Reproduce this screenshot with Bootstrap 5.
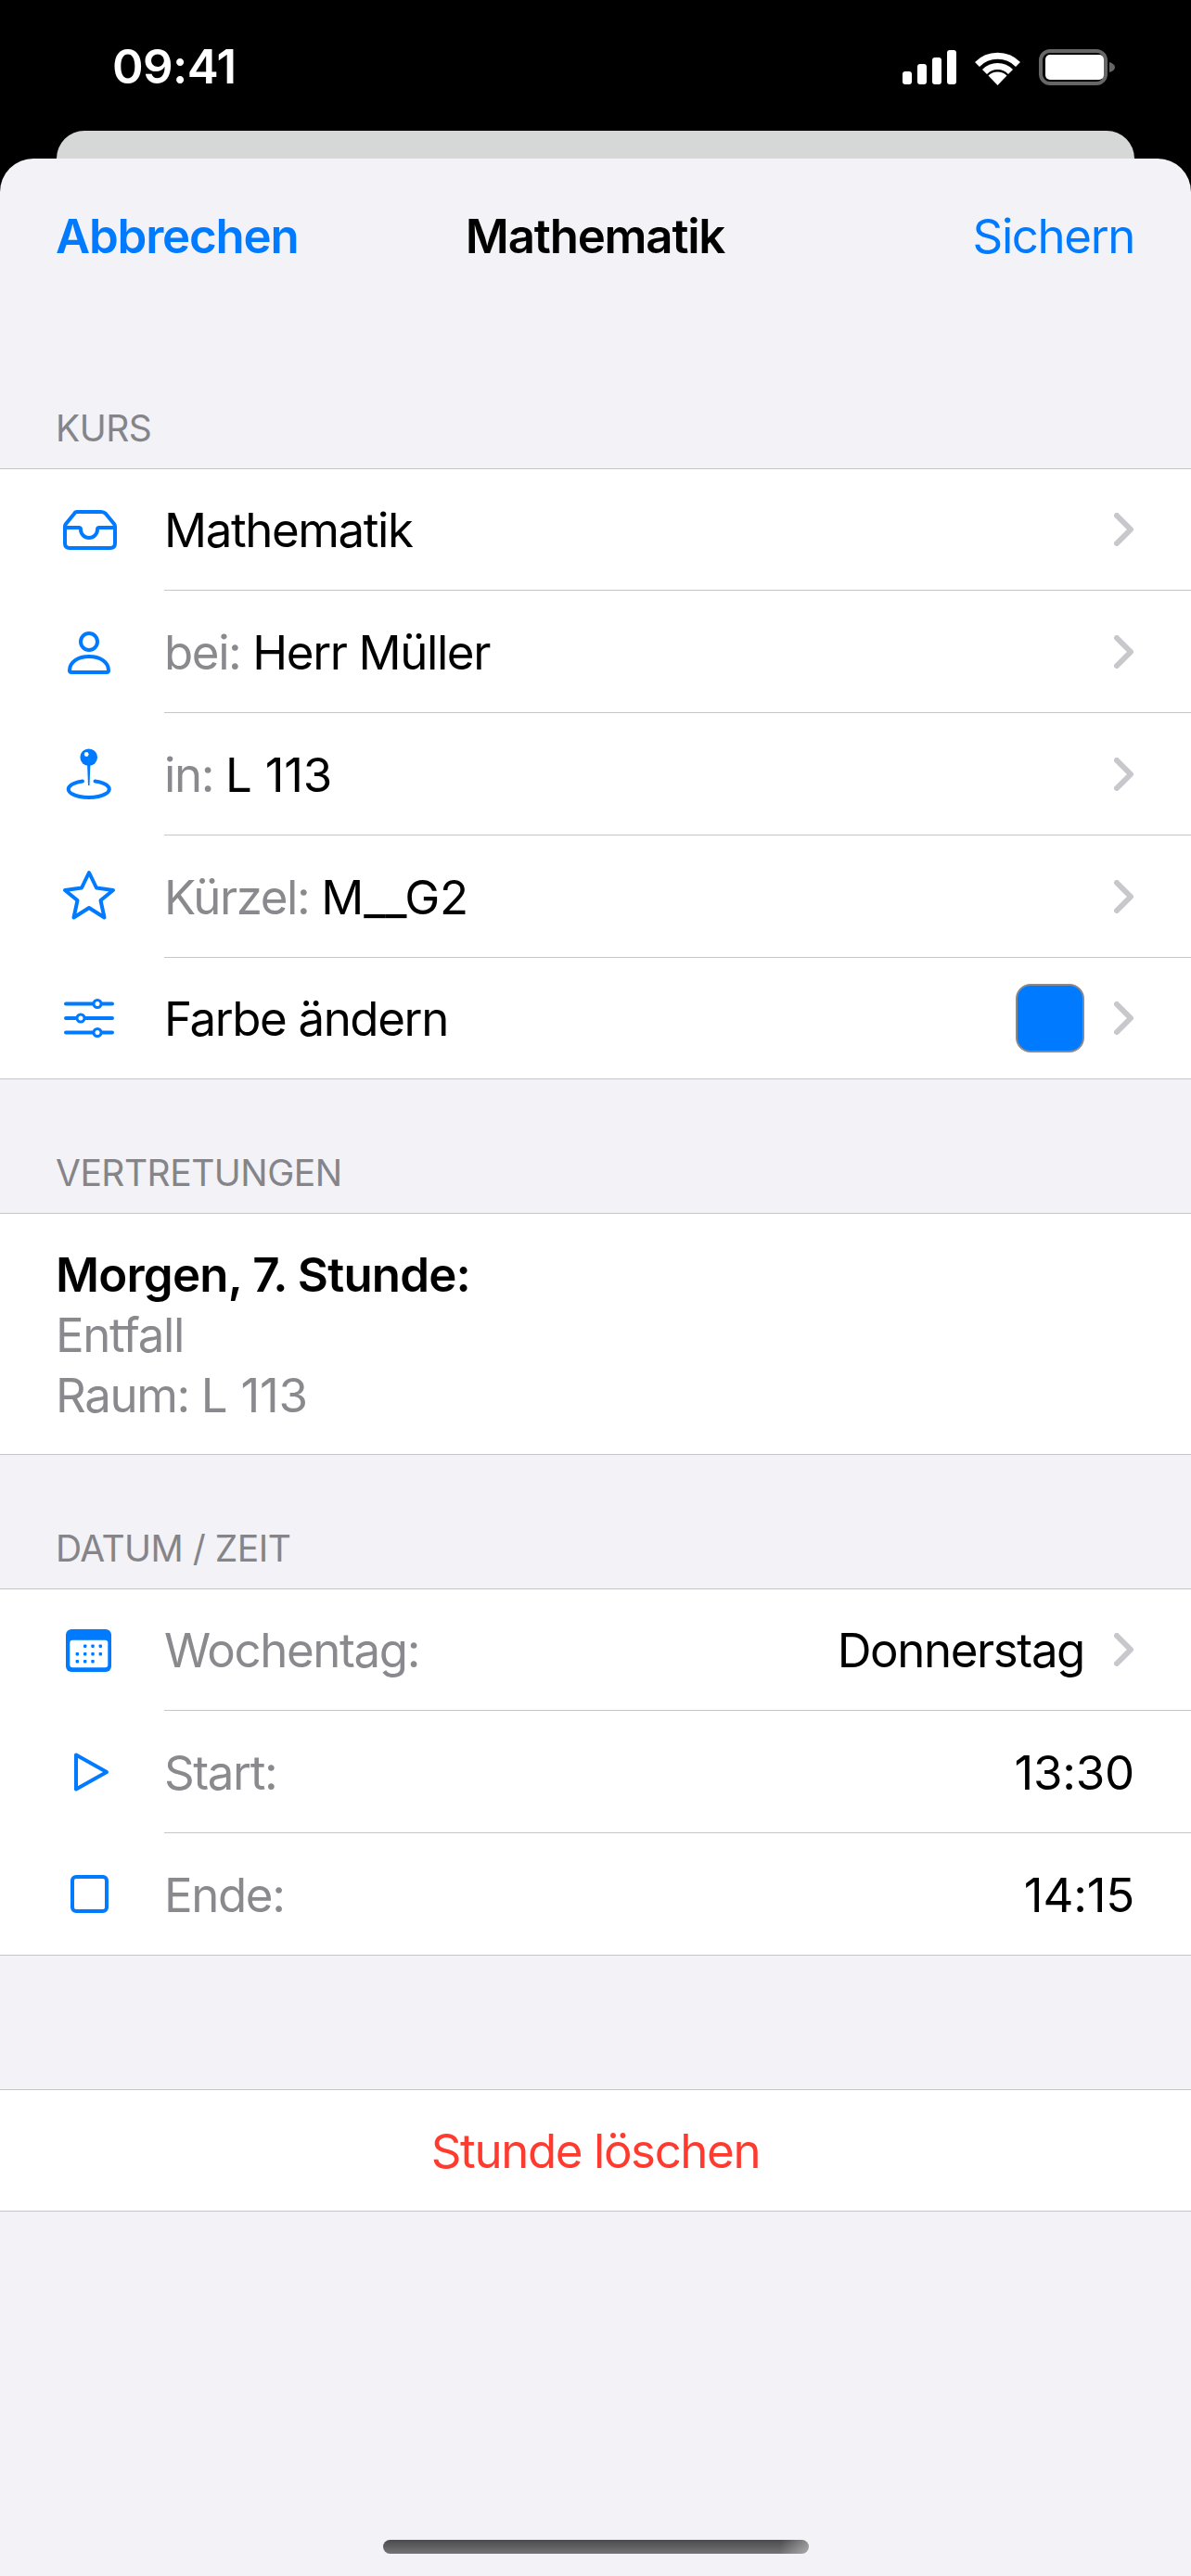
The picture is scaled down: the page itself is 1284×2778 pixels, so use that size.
<!DOCTYPE html>
<html lang="de">

<head>
    <meta charset="UTF-8">
    <title>Mathematik</title>
    <link href="https://cdn.jsdelivr.net/npm/bootstrap@5.3.3/dist/css/bootstrap.min.css" rel="stylesheet">
    <style>
        body {
            background: #000;
            font-family: Inter, "Liberation Sans", sans-serif;
            font-size: 51px;
            letter-spacing: -1.4px;
            color: #000;
        }

        .phone-page {
            min-height: 100vh;
        }

        .status-bar {
            height: 141px;
            padding: 47px 82px 0 121px;
            color: #fff;
            font-weight: 600;
            line-height: 50px;
        }

        .status-bar svg {
            display: block;
        }

        .status-bar .num-txt {
            letter-spacing: -.6px;
        }

        .back-card {
            height: 30px;
            margin: 0 61px;
            background: #d6d8d7;
            border-radius: 30px 30px 0 0;
        }

        .sheet {
            background: #f2f2f7;
            border-radius: 36px 36px 0 0;
        }

        .sheet-nav {
            height: 190px;
            padding: 58px 61px 0 60px;
            line-height: 52px;
        }

        .sheet-nav > * {
            flex: 1 1 0;
        }

        .sheet-nav a {
            color: #007aff;
            text-decoration: none;
        }

        .semi-txt {
            font-weight: 600;
            letter-spacing: -1.2px;
        }

        .section-label {
            margin-top: 76px;
            padding: 1px 61px 20px 60px;
            height: 68px;
            font-size: 39px;
            line-height: 47px;
            letter-spacing: -.5px;
            color: #858589;
            text-transform: uppercase;
        }

        .ios-list {
            border-top: 1px solid #c6c6c8;
            border-bottom: 1px solid #c6c6c8;
            border-radius: 0;
            background: #fff;
        }

        .ios-row {
            height: 132px;
            padding: 0;
            border: 0;
            color: #000;
        }

        .ios-row:first-child {
            height: 130px;
        }

        .ios-row.row-short {
            height: 131px;
        }

        .ios-ico {
            width: 177px;
            padding-left: 56px;
            flex: none;
        }

        .ios-ico svg {
            display: block;
        }

        .ios-line {
            min-width: 0;
            padding-right: 61px;
        }

        .ios-line span {
            padding-top: 3px;
        }

        .ios-row + .ios-row .ios-line {
            border-top: 1px solid #c6c6c8;
        }

        .muted-txt {
            color: #8a8a8e;
        }

        .num-txt {
            letter-spacing: -.2px;
        }

        .chev {
            display: block;
            flex: none;
            margin-left: 32px;
        }

        .color-swatch {
            width: 74px;
            height: 74px;
            background: #007aff;
            border: 2px solid #8a8a8e;
            border-radius: 16px;
            flex: none;
        }

        .subst-block {
            height: 261px;
            padding: 33px 61px 0 60px;
            line-height: 65px;
        }

        .subst-block .semi-txt {
            letter-spacing: -.8px;
        }

        .delete-row {
            margin-top: 144px;
            height: 132px;
            padding-top: 2px;
            color: #ff3b30;
        }

        .sheet-foot {
            height: 393px;
            padding-top: 354px;
        }

        .home-bar {
            width: 459px;
            height: 15px;
            background: linear-gradient(100deg, rgba(255, 255, 255, 0) 93%, rgba(255, 255, 255, .4)), linear-gradient(180deg, #4b4b4d, #747476);
            border-radius: 8px;
        }
    </style>
</head>

<body>
    <div class="phone-page d-flex flex-column">
        <div class="status-bar d-flex justify-content-between">
            <span class="num-txt">09:41</span>
            <div class="d-flex align-items-start">
                <svg width="58" height="37" viewBox="0 0 58 37" fill="#fff" style="margin-top:7px">
                    <rect x="0" y="23" width="10" height="14" rx="3" />
                    <rect x="16" y="15" width="10" height="22" rx="3" />
                    <rect x="32" y="8" width="10" height="29" rx="3" />
                    <rect x="48" y="0" width="10" height="37" rx="3" />
                </svg>
                <svg width="49" height="37" viewBox="0 0 49 37" fill="none" stroke="#fff" stroke-width="7" style="margin-top:8px;margin-left:20px">
                    <path d="M2.5 14.5A31 31 0 0 1 46.5 14.5" />
                    <path d="M10.5 22.5A19.5 19.5 0 0 1 38.5 22.5" />
                    <path d="M24.5 37L14.5 26.5A14.5 14.5 0 0 1 34.5 26.5Z" fill="#fff" stroke="none" />
                </svg>
                <svg width="82" height="39" viewBox="0 0 82 39" style="margin-top:6px;margin-left:20px">
                    <rect x="2" y="2" width="70" height="35" rx="10" fill="none" stroke="#666" stroke-width="4" />
                    <rect x="7" y="6" width="63" height="27" rx="5" fill="#fff" />
                    <path d="M76 14q6 2 6 5.500t-6 5.500z" fill="#666" />
                </svg>
            </div>
        </div>
        <div class="back-card"></div>
        <div class="sheet flex-grow-1">
            <div class="sheet-nav d-flex">
                <div><a href="#" class="semi-txt">Abbrechen</a></div>
                <div class="semi-txt text-center">Mathematik</div>
                <div class="text-end"><a href="#">Sichern</a></div>
            </div>

            <div class="section-label">Kurs</div>
            <div class="list-group list-group-flush ios-list">
                <div class="list-group-item ios-row d-flex">
                    <span class="ios-ico d-flex align-items-center">
                        <svg width="80" height="80" viewBox="0 0 80 80" fill="none" stroke="#007aff" stroke-width="4" stroke-linejoin="round" stroke-linecap="round">
                            <path d="M27 21h26q3 0 5 2l9 11q1 1 1 3v18q0 5-5 5H19q-5 0-5-5V37q0-2 1-3l9-11q1-2 3-2z" />
                            <path d="M14 38H29q2 0 2 2a9 9 0 0 0 18 0q0-2 2-2H68" />
                        </svg>
                    </span>
                    <div class="ios-line d-flex flex-grow-1 align-items-center justify-content-between">
                        <span>Mathematik</span>
                        <svg class="chev" width="22" height="36" viewBox="0 0 22 36" fill="none" stroke="#c7c7cc" stroke-width="6" stroke-linecap="round" stroke-linejoin="round"><path d="M3 3l15 15L3 33" /></svg>
                    </div>
                </div>
                <div class="list-group-item ios-row d-flex">
                    <span class="ios-ico d-flex align-items-center">
                        <svg width="80" height="80" viewBox="0 0 80 80" fill="none" stroke="#007aff" stroke-width="4">
                            <circle cx="40" cy="30" r="9" />
                            <path d="M21 63q-2 0-2-2c0-9 9-15 21-15s21 6 21 15q0 2-2 2z" />
                        </svg>
                    </span>
                    <div class="ios-line d-flex flex-grow-1 align-items-center justify-content-between">
                        <span><span class="muted-txt">bei:</span> Herr Müller</span>
                        <svg class="chev" width="22" height="36" viewBox="0 0 22 36" fill="none" stroke="#c7c7cc" stroke-width="6" stroke-linecap="round" stroke-linejoin="round"><path d="M3 3l15 15L3 33" /></svg>
                    </div>
                </div>
                <div class="list-group-item ios-row d-flex">
                    <span class="ios-ico d-flex align-items-center">
                        <svg width="80" height="80" viewBox="0 0 80 80" fill="none" stroke="#007aff" stroke-width="4">
                            <path d="M33 48.500A22 9 0 1 0 46.500 48.500" stroke-linecap="round" />
                            <path d="M38 28h3.500l-1 25h-1.500z" fill="#007aff" stroke="none" />
                            <circle cx="39.700" cy="22.700" r="9.300" fill="#007aff" stroke="none" />
                            <circle cx="37.200" cy="19.500" r="2.400" fill="#fff" stroke="none" />
                        </svg>
                    </span>
                    <div class="ios-line d-flex flex-grow-1 align-items-center justify-content-between">
                        <span><span class="muted-txt">in:</span> <span class="num-txt">L 113</span></span>
                        <svg class="chev" width="22" height="36" viewBox="0 0 22 36" fill="none" stroke="#c7c7cc" stroke-width="6" stroke-linecap="round" stroke-linejoin="round"><path d="M3 3l15 15L3 33" /></svg>
                    </div>
                </div>
                <div class="list-group-item ios-row d-flex">
                    <span class="ios-ico d-flex align-items-center">
                        <svg width="80" height="80" viewBox="0 0 80 80" fill="none" stroke="#007aff" stroke-width="4" stroke-linejoin="round">
                            <path d="M40 15L48 31.500L66 34L52.500 45L56.500 63.500L40 53L23.500 63.500L27.500 45L14 34L32 31.500Z" />
                        </svg>
                    </span>
                    <div class="ios-line d-flex flex-grow-1 align-items-center justify-content-between">
                        <span><span class="muted-txt">Kürzel:</span> <span class="num-txt">M__G2</span></span>
                        <svg class="chev" width="22" height="36" viewBox="0 0 22 36" fill="none" stroke="#c7c7cc" stroke-width="6" stroke-linecap="round" stroke-linejoin="round"><path d="M3 3l15 15L3 33" /></svg>
                    </div>
                </div>
                <div class="list-group-item ios-row row-short d-flex">
                    <span class="ios-ico d-flex align-items-center">
                        <svg width="80" height="80" viewBox="0 0 80 80" fill="none" stroke="#007aff" stroke-width="4" stroke-linecap="round">
                            <path d="M15 24.500H65M15 40H65M15 55.500H65" />
                            <g fill="#fff" stroke-width="3">
                                <circle cx="49" cy="24.500" r="4" />
                                <circle cx="31" cy="40" r="4" />
                                <circle cx="49" cy="55.500" r="4" />
                            </g>
                        </svg>
                    </span>
                    <div class="ios-line d-flex flex-grow-1 align-items-center justify-content-between">
                        <span>Farbe ändern</span>
                        <div class="d-flex align-items-center">
                            <div class="color-swatch"></div>
                            <svg class="chev" width="22" height="36" viewBox="0 0 22 36" fill="none" stroke="#c7c7cc" stroke-width="6" stroke-linecap="round" stroke-linejoin="round"><path d="M3 3l15 15L3 33" /></svg>
                        </div>
                    </div>
                </div>
            </div>

            <div class="section-label">Vertretungen</div>
            <div class="ios-list subst-block">
                <div class="semi-txt">Morgen, 7. Stunde:</div>
                <div class="muted-txt">Entfall</div>
                <div class="muted-txt">Raum: <span class="num-txt">L 113</span></div>
            </div>

            <div class="section-label">Datum / Zeit</div>
            <div class="list-group list-group-flush ios-list">
                <div class="list-group-item ios-row d-flex">
                    <span class="ios-ico d-flex align-items-center">
                        <svg width="80" height="80" viewBox="0 0 80 80">
                            <rect x="15" y="18" width="49" height="46" rx="6" fill="#007aff" />
                            <rect x="19.300" y="29.700" width="41" height="29.500" rx="3" fill="#fff" />
                            <g fill="#007aff">
                                <rect x="34" y="34.500" width="3.400" height="3.400" rx=".8" />
                                <rect x="42.300" y="34.500" width="3.400" height="3.400" rx=".8" />
                                <rect x="50.600" y="34.500" width="3.400" height="3.400" rx=".8" />
                                <rect x="25.600" y="43" width="3.400" height="3.400" rx=".8" />
                                <rect x="34" y="43" width="3.400" height="3.400" rx=".8" />
                                <rect x="42.300" y="43" width="3.400" height="3.400" rx=".8" />
                                <rect x="50.600" y="43" width="3.400" height="3.400" rx=".8" />
                                <rect x="25.600" y="51" width="3.400" height="3.400" rx=".8" />
                                <rect x="34" y="51" width="3.400" height="3.400" rx=".8" />
                                <rect x="42.300" y="51" width="3.400" height="3.400" rx=".8" />
                            </g>
                        </svg>
                    </span>
                    <div class="ios-line d-flex flex-grow-1 align-items-center justify-content-between">
                        <span class="muted-txt">Wochentag:</span>
                        <div class="d-flex align-items-center">
                            <span>Donnerstag</span>
                            <svg class="chev" width="22" height="36" viewBox="0 0 22 36" fill="none" stroke="#c7c7cc" stroke-width="6" stroke-linecap="round" stroke-linejoin="round"><path d="M3 3l15 15L3 33" /></svg>
                        </div>
                    </div>
                </div>
                <div class="list-group-item ios-row d-flex">
                    <span class="ios-ico d-flex align-items-center">
                        <svg width="80" height="80" viewBox="0 0 80 80" fill="none" stroke="#007aff" stroke-width="4" stroke-linejoin="round">
                            <path d="M26 22.500L59 41L26 59.500Z" />
                        </svg>
                    </span>
                    <div class="ios-line d-flex flex-grow-1 align-items-center justify-content-between">
                        <span class="muted-txt">Start:</span>
                        <span class="num-txt">13:30</span>
                    </div>
                </div>
                <div class="list-group-item ios-row d-flex">
                    <span class="ios-ico d-flex align-items-center">
                        <svg width="80" height="80" viewBox="0 0 80 80" fill="none" stroke="#007aff" stroke-width="4">
                            <rect x="22" y="22" width="37" height="37" rx="4" />
                        </svg>
                    </span>
                    <div class="ios-line d-flex flex-grow-1 align-items-center justify-content-between">
                        <span class="muted-txt">Ende:</span>
                        <span class="num-txt">14:15</span>
                    </div>
                </div>
            </div>

            <div class="ios-list delete-row d-flex align-items-center justify-content-center">Stunde löschen</div>

            <div class="sheet-foot d-flex justify-content-center">
                <div class="home-bar"></div>
            </div>
        </div>
    </div>
</body>

</html>
